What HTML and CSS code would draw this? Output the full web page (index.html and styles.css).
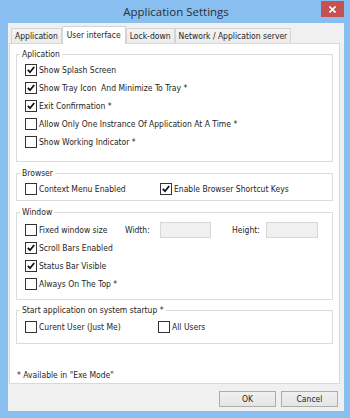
FILE: index.html
```html
<!DOCTYPE html>
<html lang="en">
<head>
    <meta charset="UTF-8">
    <title>Application Settings</title>
    <link rel="stylesheet" href="styles.css">
</head>
<body>

<div class="window">
    <div class="titlebar">
        <span class="title">Application Settings</span>
        <button class="close-button" aria-label="Close">
            <svg width="7" height="7" viewBox="0 0 7 7"><path d="M0.5 0.5 L6.5 6.5 M6.5 0.5 L0.5 6.5" stroke="#fff" stroke-width="1.6"/></svg>
        </button>
    </div>

    <div class="client">
        <div class="tabs">
            <div class="tab">Application</div>
            <div class="tab active">User interface</div>
            <div class="tab">Lock-down</div>
            <div class="tab">Network / Application server</div>
        </div>

        <div class="panel">
            <fieldset class="group group-app">
                <legend>Aplication</legend>
                <div class="row"><span class="check on"></span>Show Splash Screen</div>
                <div class="row"><span class="check on"></span>Show Tray Icon&nbsp; And Minimize To Tray *</div>
                <div class="row"><span class="check on"></span>Exit Confirmation *</div>
                <div class="row"><span class="check"></span>Allow Only One Instrance Of Application At A Time *</div>
                <div class="row"><span class="check"></span>Show Working Indicator *</div>
            </fieldset>

            <fieldset class="group group-browser">
                <legend>Browser</legend>
                <div class="row">
                    <div class="cell cell-first"><span class="check"></span>Context Menu Enabled</div>
                    <div class="cell"><span class="check on"></span>Enable Browser Shortcut Keys</div>
                </div>
            </fieldset>

            <fieldset class="group group-window">
                <legend>Window</legend>
                <div class="row">
                    <div class="cell cell-fixed"><span class="check"></span>Fixed window size</div>
                    <span class="field-label">Width:</span>
                    <span class="field field-width"></span>
                    <span class="field-label field-label-height">Height:</span>
                    <span class="field field-height"></span>
                </div>
                <div class="row"><span class="check on"></span>Scroll Bars Enabled</div>
                <div class="row"><span class="check on"></span>Status Bar Visible</div>
                <div class="row"><span class="check"></span>Always On The Top *</div>
            </fieldset>

            <fieldset class="group group-startup">
                <legend>Start application on system startup *</legend>
                <div class="row">
                    <div class="cell cell-user"><span class="check"></span>Curent User (Just Me)</div>
                    <div class="cell"><span class="check"></span>All Users</div>
                </div>
            </fieldset>

            <p class="note">* Available in "Exe Mode"</p>
        </div>

        <div class="buttons">
            <button class="btn">OK</button>
            <button class="btn">Cancel</button>
        </div>
    </div>
</div>

</body>
</html>
```

FILE: styles.css
```css
body {
    margin: 0;
    padding: 0;
    background-color: #88bff0;
    font-family: 'DejaVu Sans Condensed', 'Liberation Sans', sans-serif;
    font-size: 8.5px;
    color: #1e1e1e;
}

.window {
    width: 350px;
    height: 418px;
    background-color: #88bff0;
    padding: 0 6px 7px 8px;
    box-sizing: border-box;
    display: flex;
    flex-direction: column;
}

.titlebar {
    height: 23px;
    display: grid;
    grid-template-columns: 1fr auto 1fr;
    align-items: center;
    margin: 0 -6px 0 -8px;
}

.title {
    grid-column: 2;
    font-family: 'Open Sans', sans-serif;
    font-size: 11.5px;
    color: #2a2f36;
    margin-left: 2px;
}

.close-button {
    grid-column: 3;
    justify-self: end;
    align-self: start;
    width: 23px;
    height: 16px;
    margin: 1px 6px 0 0;
    padding: 0;
    border: none;
    background-color: #c75050;
    display: flex;
    align-items: center;
    justify-content: center;
}

.client {
    flex: 1;
    background-color: #f0f0f0;
    display: flex;
    flex-direction: column;
    padding: 3px 0 4px 0;
}

.tabs {
    display: flex;
    align-items: flex-end;
    height: 17px;
    margin-left: 3px;
    position: relative;
    z-index: 1;
}

.tab {
    height: 15px;
    line-height: 14px;
    padding: 0 3px;
    border: 1px solid #d4d4d4;
    border-bottom: none;
    box-sizing: border-box;
    background: linear-gradient(#f4f4f4, #ebebeb);
    white-space: nowrap;
}

.tab.active {
    height: 18px;
    line-height: 16px;
    margin-bottom: -1px;
    background: #ffffff;
    padding: 0 4px;
}

.panel {
    height: 341px;
    box-sizing: border-box;
    margin: 0 4px 0 1px;
    background-color: #ffffff;
    border: 1px solid #d9d9d9;
    padding: 5px 6px 3px 6px;
    display: flex;
    flex-direction: column;
}

.group {
    margin: 0 0 6px 0;
    padding: 2px 0 2px 3px;
    border: 1px solid #dcdcdc;
    min-width: 0;
}

.group legend {
    padding: 0 2px;
    line-height: 10px;
}

.group-app {
    padding-bottom: 10px;
}

.group-window {
    padding-top: 4px;
    padding-bottom: 6px;
    margin-bottom: 5px;
}

.group-startup {
    padding-top: 3px;
    padding-bottom: 7px;
}

.row {
    height: 18px;
    display: flex;
    align-items: center;
    padding-left: 5px;
    white-space: nowrap;
}

.cell {
    display: flex;
    align-items: center;
}

.cell-first {
    width: 135px;
}

.cell-user {
    width: 133px;
}

.cell-fixed {
    width: 100px;
}

.check {
    width: 12px;
    height: 12px;
    box-sizing: border-box;
    border: 1px solid #333333;
    background-color: #ffffff;
    margin-right: 2px;
    flex-shrink: 0;
}

.check.on {
    background-image: url("data:image/svg+xml;utf8,<svg xmlns='http://www.w3.org/2000/svg' width='10' height='10' viewBox='0 0 10 10'><path d='M1.8 4.8 L4 7.2 L8.2 2' fill='none' stroke='%23111' stroke-width='1.8'/></svg>");
    background-repeat: no-repeat;
    background-position: center;
}

.field-label {
    width: 35px;
}

.field-label-height {
    width: 34px;
    margin-left: 21px;
}

.field {
    height: 16px;
    box-sizing: border-box;
    background-color: #f0f0f0;
    border: 1px solid #d7d7d7;
}

.field-width {
    width: 51px;
}

.field-height {
    width: 52px;
}

.note {
    margin: auto 0 0 1px;
    line-height: 10px;
}

.buttons {
    display: flex;
    justify-content: flex-end;
    gap: 5px;
    margin-top: 7px;
    padding-right: 6px;
}

.btn {
    width: 57px;
    height: 16px;
    padding: 0;
    font-family: inherit;
    font-size: 8.5px;
    color: #1e1e1e;
    border: 1px solid #adadad;
    background: linear-gradient(#f0f0f0, #e5e5e5);
}
```
